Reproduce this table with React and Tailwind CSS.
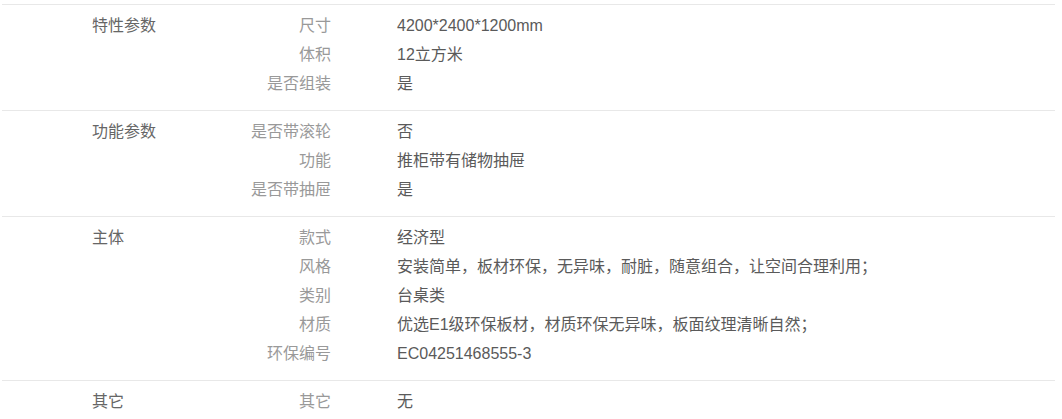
import React from "react";

const sections = [
  {
    title: "特性参数",
    rows: [
      ["尺寸", "4200*2400*1200mm"],
      ["体积", "12立方米"],
      ["是否组装", "是"],
    ],
  },
  {
    title: "功能参数",
    rows: [
      ["是否带滚轮", "否"],
      ["功能", "推柜带有储物抽屉"],
      ["是否带抽屉", "是"],
    ],
  },
  {
    title: "主体",
    rows: [
      ["款式", "经济型"],
      ["风格", "安装简单，板材环保，无异味，耐脏，随意组合，让空间合理利用；"],
      ["类别", "台桌类"],
      ["材质", "优选E1级环保板材，材质环保无异味，板面纹理清晰自然；"],
      ["环保编号", "EC04251468555-3"],
    ],
  },
  {
    title: "其它",
    rows: [["其它", "无"]],
  },
];

export default function App() {
  return (
    <div
      className="bg-white w-[1062px] h-[419px] overflow-hidden pt-[4px] text-[16px]"
      style={{ fontFamily: '"Liberation Sans", "Noto Sans CJK SC", sans-serif' }}
    >
      <div className="ml-[2px] w-[1053px]">
        {sections.map((section) => (
          <div
            key={section.title}
            className="flex border-t border-[#e8e8e8] pt-[6px] pb-[12px]"
          >
            {/* Section title */}
            <div className="w-[150px] pl-[90px] leading-[29px] text-[#666] shrink-0 whitespace-nowrap">
              {section.title}
            </div>

            {/* Rows */}
            <div className="flex flex-col">
              {section.rows.map(([label, value]) => (
                <div key={label} className="flex leading-[29px] whitespace-nowrap">
                  <div className="w-[179px] text-right text-[#999] shrink-0">
                    {label}
                  </div>
                  <div className="pl-[66px] text-[#5a5a5a]">{value}</div>
                </div>
              ))}
            </div>
          </div>
        ))}
      </div>
    </div>
  );
}
